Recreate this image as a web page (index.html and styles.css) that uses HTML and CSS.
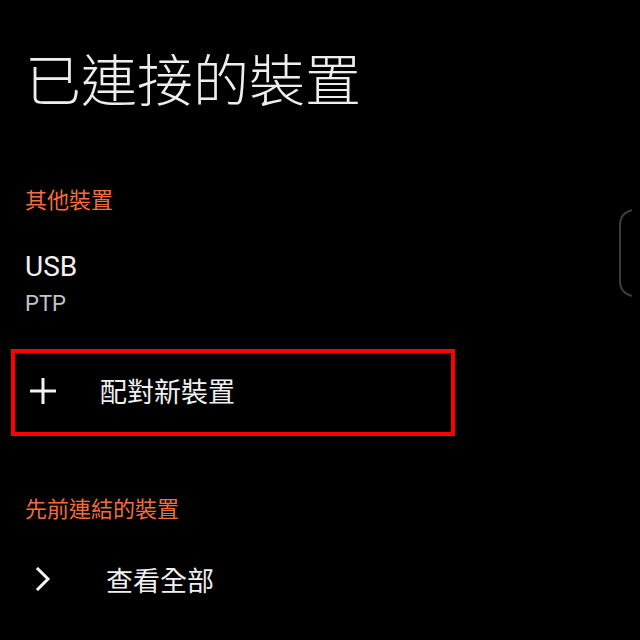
FILE: index.html
```html
<!DOCTYPE html>
<html lang="zh-Hant">
<head>
<meta charset="utf-8">
<link rel="stylesheet" href="styles.css">
</head>
<body>
<div class="screen">
  <h1 class="title">已連接的裝置</h1>
  <div class="section-head first">其他裝置</div>
  <div class="device">
    <div class="device-name">USB</div>
    <div class="device-sub">PTP</div>
  </div>
  <div class="pair-box">
    <svg class="plus" width="26" height="26" viewBox="0 0 26 26"><path d="M13 0V26M0 13H26" stroke="#f2f2f2" stroke-width="3" fill="none"/></svg>
    <span class="pair-text">配對新裝置</span>
  </div>
  <div class="section-head second">先前連結的裝置</div>
  <div class="row">
    <svg class="chev" width="16" height="24" viewBox="0 0 16 24"><path d="M3 2L13 12L3 22" stroke="#f2f2f2" stroke-width="3" fill="none" stroke-linecap="square"/></svg>
    <span class="row-text">查看全部</span>
  </div>
  <svg class="edge" width="20" height="90" viewBox="0 0 20 90"><path d="M14 1Q2 4 2 16V72Q2 84 14 87" stroke="#3c3c3c" stroke-width="2" fill="none"/></svg>
</div>
</body>
</html>
```
FILE: styles.css
```css
html, body {
  margin: 0;
  padding: 0;
  background: #000;
}
.screen {
  position: relative;
  width: 640px;
  height: 640px;
  overflow: hidden;
  background: #000;
  font-family: "Noto Sans CJK TC", "Noto Sans", sans-serif;
  color: #f0f0f0;
}
.title {
  margin: 0;
  padding-top: 49px;
  padding-left: 25px;
  font-size: 56px;
  line-height: 56px;
  font-weight: 300;
  color: #eeeeee;
}
.section-head {
  padding-left: 25px;
  font-size: 22px;
  line-height: 22px;
  color: #f36d3d;
}
.section-head.first { margin-top: 82px; }
.section-head.second { margin-top: 60px; }
.device {
  padding-left: 25px;
  margin-top: 44px;
  font-family: Roboto, "Noto Sans", sans-serif;
}
.device-name {
  font-size: 28px;
  line-height: 28px;
  color: #f2f2f2;
}
.device-sub {
  margin-top: 12px;
  font-size: 22px;
  line-height: 22px;
  color: #c4c4c4;
}
.pair-box {
  margin-top: 34px;
  margin-left: 11px;
  width: 444px;
  height: 87px;
  box-sizing: border-box;
  border: 4px solid #ff0000;
  display: flex;
  align-items: center;
  padding-left: 15px;
  padding-bottom: 4px;
}
.plus { flex: none; }
.pair-text {
  margin-left: 44px;
  font-size: 27px;
  line-height: 27px;
  color: #f0f0f0;
}
.row {
  margin-top: 33px;
  height: 56px;
  display: flex;
  align-items: center;
  padding-left: 35px;
}
.chev { flex: none; }
.row-text {
  margin-left: 55px;
  font-size: 27px;
  line-height: 27px;
  color: #f0f0f0;
}
.edge {
  position: absolute;
  left: 618px;
  top: 209px;
}
```
